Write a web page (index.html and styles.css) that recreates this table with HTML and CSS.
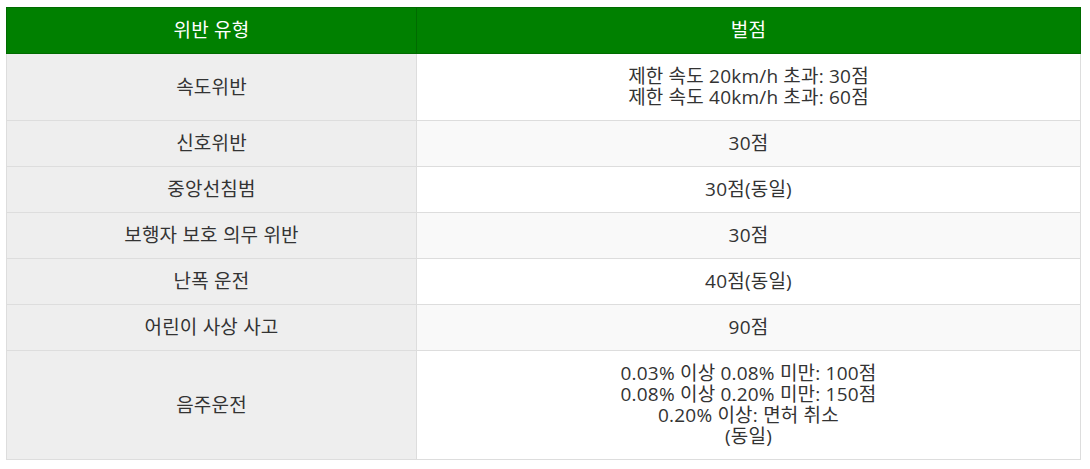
FILE: index.html
```html
<!DOCTYPE html>
<html lang="ko">
<head>
<meta charset="utf-8">
<link rel="stylesheet" href="styles.css">
</head>
<body>
<div class="wrap">
<table class="penalty">
  <thead>
    <tr><th class="col-type">위반 유형</th><th>벌점</th></tr>
  </thead>
  <tbody>
    <tr><td class="type">속도위반</td><td>제한 속도 20km/h 초과: 30점<br>제한 속도 40km/h 초과: 60점</td></tr>
    <tr><td class="type">신호위반</td><td>30점</td></tr>
    <tr><td class="type">중앙선침범</td><td>30점(동일)</td></tr>
    <tr><td class="type">보행자 보호 의무 위반</td><td>30점</td></tr>
    <tr><td class="type">난폭 운전</td><td>40점(동일)</td></tr>
    <tr><td class="type">어린이 사상 사고</td><td>90점</td></tr>
    <tr><td class="type">음주운전</td><td>0.03% 이상 0.08% 미만: 100점<br>0.08% 이상 0.20% 미만: 150점<br>0.20% 이상: 면허 취소<br>(동일)</td></tr>
  </tbody>
</table>
</div>
</body>
</html>
```
FILE: styles.css
```css
html, body {
  margin: 0;
  padding: 0;
  background: #fff;
}
.wrap {
  padding: 7px 6px;
}
.penalty {
  width: 1075px;
  border-collapse: collapse;
  font-family: "Open Sans", "Noto Sans CJK KR", sans-serif;
  font-size: 19px;
  letter-spacing: 0.2px;
  line-height: 21px;
  color: #333;
}
.penalty th {
  background: #008000;
  color: #fff;
  font-weight: normal;
  height: 21px;
  padding: 12px 8px;
  border: 1px solid #006b00;
  text-align: center;
}
.penalty .col-type {
  width: 393px;
}
.penalty td {
  height: 21px;
  border: 1px solid #ddd;
  padding: 12px 8px;
  text-align: center;
  vertical-align: middle;
  background: #fff;
}
.penalty tbody tr:nth-child(even) td {
  background: #f9f9f9;
}
.penalty td.type,
.penalty tbody tr:nth-child(even) td.type {
  background: #eee;
}
```
